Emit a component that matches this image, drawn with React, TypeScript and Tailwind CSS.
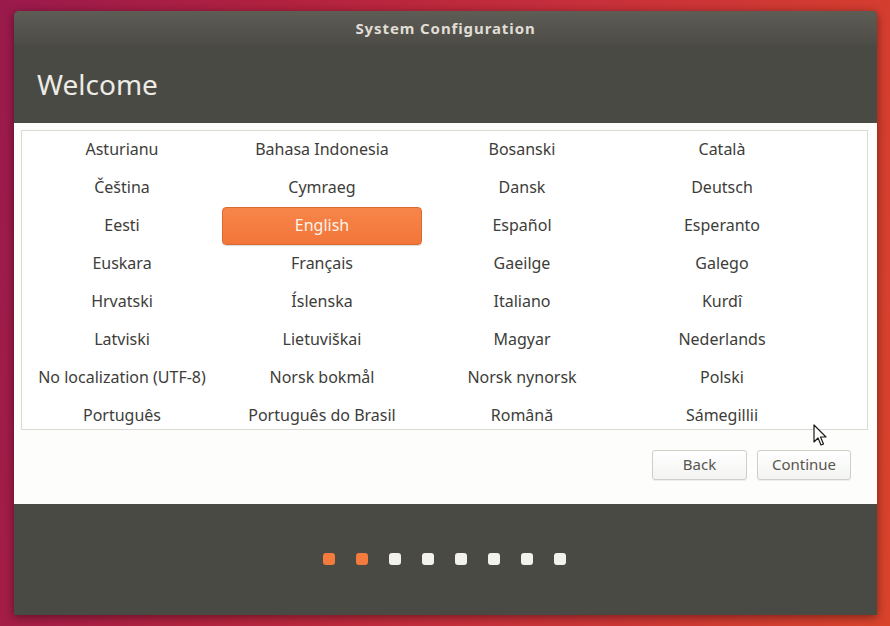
import { useState } from 'react';

const languages = [
  'Asturianu', 'Bahasa Indonesia', 'Bosanski', 'Català',
  'Čeština', 'Cymraeg', 'Dansk', 'Deutsch',
  'Eesti', 'English', 'Español', 'Esperanto',
  'Euskara', 'Français', 'Gaeilge', 'Galego',
  'Hrvatski', 'Íslenska', 'Italiano', 'Kurdî',
  'Latviski', 'Lietuviškai', 'Magyar', 'Nederlands',
  'No localization (UTF-8)', 'Norsk bokmål', 'Norsk nynorsk', 'Polski',
  'Português', 'Português do Brasil', 'Română', 'Sámegillii',
];

export default function App() {
  const [selected, setSelected] = useState('English');
  const step = 1;

  return (
    <div
      className="relative w-[890px] h-[626px] overflow-hidden bg-[linear-gradient(100deg,#9a1a4c_0%,#b3223f_30%,#c8303a_60%,#d9432a_100%)] pl-[14px] pt-[11px]"
      style={{ fontFamily: '"Noto Sans", "DejaVu Sans", sans-serif' }}
    >
      {/* Window */}
      <div className="flex flex-col w-[863px] h-[604px] rounded-t-[5px] overflow-hidden bg-[#4a4a44] shadow-[0_2px_10px_rgba(0,0,0,0.45)]">
        {/* Title bar */}
        <div className="h-[34px] shrink-0 flex items-center justify-center bg-[linear-gradient(#5d5c55,#4c4b46)] text-[15px] font-bold text-[#e0ddd5] tracking-[0.9px]">
          System Configuration
        </div>

        {/* Header */}
        <div className="h-[78px] shrink-0 flex items-center pl-[23px] pb-[1px]">
          <h1 className="text-[28px] leading-none text-[#ecebe6]">Welcome</h1>
        </div>

        {/* Content */}
        <div className="h-[381px] shrink-0 bg-[#fdfdfc] px-[7px] pr-[9px] pt-[7px] flex flex-col">
          <div className="h-[300px] border border-[#dad9d5] bg-white overflow-hidden">
            <div className="grid grid-cols-[repeat(4,200px)] auto-rows-[38px]">
              {languages.map((lang) => (
                <button
                  key={lang}
                  onClick={() => setSelected(lang)}
                  className={
                    lang === selected
                      ? 'flex items-center justify-center pb-[2px] rounded-[4px] border border-[#dc6a30] bg-[linear-gradient(#f78549,#f2763a)] text-[16px] text-[#fdf3ea] shadow-[0_1px_1px_rgba(0,0,0,0.15)]'
                      : 'flex items-center justify-center pb-[2px] text-[16px] text-[#3d3d3a]'
                  }
                >
                  {lang}
                </button>
              ))}
            </div>
          </div>

          <div className="flex justify-end gap-[10px] mt-[20px] pr-[17px]">
            <button className="w-[95px] h-[30px] pb-[1px] rounded-[3px] border border-[#cfcec9] bg-[linear-gradient(#ffffff,#f3f3f1)] text-[15px] text-[#56564f] shadow-[0_1px_0_rgba(0,0,0,0.06)]">
              Back
            </button>
            <button className="w-[94px] h-[30px] pb-[1px] rounded-[3px] border border-[#cfcec9] bg-[linear-gradient(#ffffff,#f3f3f1)] text-[15px] text-[#56564f] shadow-[0_1px_0_rgba(0,0,0,0.06)]">
              Continue
            </button>
          </div>
        </div>

        {/* Progress dots */}
        <div className="flex-1 flex items-center justify-center gap-[21px] pb-[1px] pr-[3px]">
          {Array.from({ length: 8 }).map((_, i) => (
            <div
              key={i}
              className={
                i <= step
                  ? 'w-[12px] h-[12px] rounded-[3px] bg-[#f47a3e]'
                  : 'w-[12px] h-[12px] rounded-[3px] bg-[#f2f1ee]'
              }
            />
          ))}
        </div>
      </div>

      {/* Mouse pointer */}
      <svg className="absolute left-[813px] top-[424px]" width="15" height="23" viewBox="0 0 15 23">
        <path
          d="M1 1 L1 18 L5 14 L8 21 L10.5 20 L7.5 13 L13 13 Z"
          fill="#ffffff"
          stroke="#1a1a1a"
          strokeWidth="1.2"
          strokeLinejoin="round"
        />
      </svg>
    </div>
  );
}
